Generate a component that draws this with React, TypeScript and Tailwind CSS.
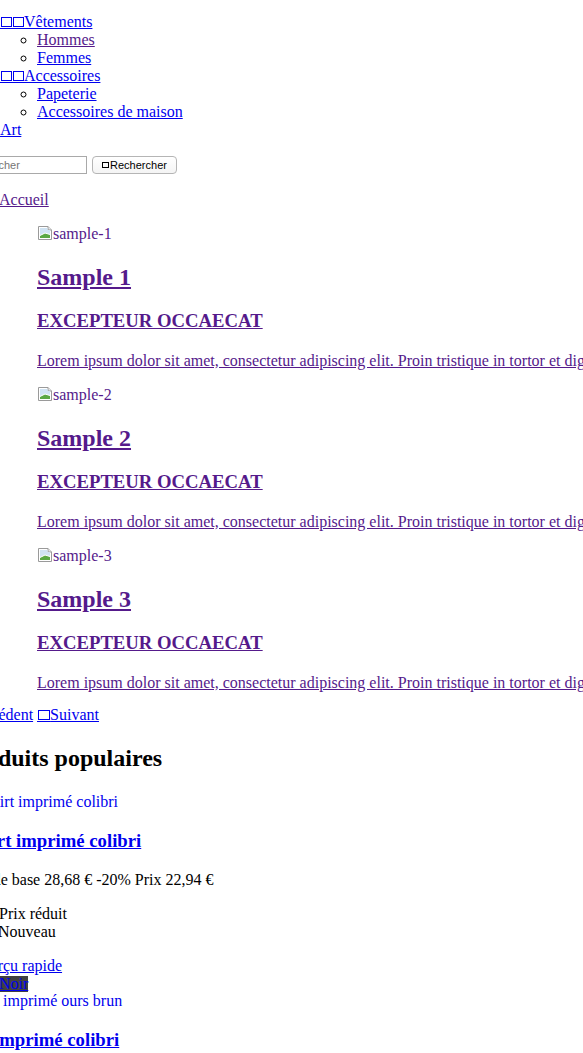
import React from 'react';

const serif = "font-['Liberation_Serif','Times_New_Roman',serif]";

function Tofu({ w = 11, h = 10 }: { w?: number; h?: number }) {
  return (
    <span className="inline-block border-b border-current pb-[1px] -mb-[2px]">
      <span className="block border border-current mx-[0.5px]" style={{ width: w, height: h }} />
    </span>
  );
}

function BrokenImage() {
  return (
    <svg width="16" height="16" viewBox="0 0 16 16" className="inline-block align-[-2px]">
      <path d="M1.5 1.5H11L14.5 5V14.5H1.5Z" fill="#fff" stroke="#9a9a9a" />
      <path d="M11 1.5V5H14.5" fill="#e8e8e8" stroke="#9a9a9a" />
      <rect x="3" y="3" width="7.5" height="10" fill="#cfe3f3" />
      <rect x="3" y="5" width="10" height="8" fill="#cfe3f3" />
      <path d="M3 13V10.5L8 8L13 9.5V13Z" fill="#5aa844" />
      <path d="M3 10.5L8 8L13 9.5" fill="none" stroke="#fff" strokeWidth="1" />
    </svg>
  );
}

const slides = ['1', '2', '3'];

export default function App() {
  return (
    <div
      className={`w-[583px] h-[1053px] overflow-hidden bg-white text-black text-[16px] leading-[18px] whitespace-nowrap ${serif}`}
    >
      {/* menu */}
      <ul className="pt-[13px]">
        <li>
          <a href="#" className="text-[#0000ee] underline">
            <Tofu />
            <Tofu />
            Vêtements
          </a>
          <ul className="list-[circle] pl-[37px]">
            <li>
              <a href="#" className="text-[#551a8b] underline">Hommes</a>
            </li>
            <li>
              <a href="#" className="text-[#0000ee] underline">Femmes</a>
            </li>
          </ul>
        </li>
        <li>
          <a href="#" className="text-[#0000ee] underline">
            <Tofu />
            <Tofu />
            Accessoires
          </a>
          <ul className="list-[circle] pl-[37px]">
            <li>
              <a href="#" className="text-[#0000ee] underline">Papeterie</a>
            </li>
            <li>
              <a href="#" className="text-[#0000ee] underline">Accessoires de maison</a>
            </li>
          </ul>
        </li>
        <li>
          <a href="#" className="text-[#0000ee] underline">Art</a>
        </li>
      </ul>

      {/* search */}
      <form className="mt-[16px] flex items-center gap-[5px] font-['Liberation_Sans',Arial,sans-serif]">
        <input
          type="text"
          placeholder="Rechercher"
          className="-ml-[40px] w-[127px] h-[18px] border border-[#a9a9a9] bg-white px-[2px] text-[11px] text-black placeholder:text-[#757575] outline-none"
        />
        <button
          type="button"
          className="mt-[1px] w-[85px] h-[18px] rounded-[4px] border border-[#b5b5b5] bg-gradient-to-b from-white to-[#f4f4f4] flex items-center justify-center gap-[1px] text-[11px] leading-[14px] text-black"
        >
          <span className="inline-block w-[7px] h-[6px] border border-black" />
          Rechercher
        </button>
      </form>

      {/* breadcrumb */}
      <div className="mt-[17px]">
        <a href="#" className="-ml-[1px] text-[#551a8b] underline">Accueil</a>
      </div>

      {/* slider */}
      <ul className="pl-[37px]">
        {slides.map((n) => (
          <li key={n} className="mt-[16px]">
            <a href="#" className="block text-[#551a8b]">
              <div className="h-[18px]">
                <BrokenImage />
                <span>sample-{n}</span>
              </div>
              <h2 className="mt-[20px] text-[24px] leading-[28px] font-bold underline">Sample {n}</h2>
              <h3 className="mt-[19px] text-[18.72px] leading-[22px] font-bold underline">EXCEPTEUR OCCAECAT</h3>
              <p className="mt-[20px] underline">
                Lorem ipsum dolor sit amet, consectetur adipiscing elit. Proin tristique in tortor et dignissim. Quisque non tempor leo.
              </p>
            </a>
          </li>
        ))}
      </ul>

      <div className="mt-[14px] -ml-[30px]">
        <a href="#" className="text-[#0000ee] underline">Précédent</a>{' '}
        <a href="#" className="text-[#0000ee] underline">
          <Tofu w={12} h={10} />
          Suivant
        </a>
      </div>

      {/* popular products */}
      <h2 className="mt-[20px] -ml-[39px] text-[24px] leading-[28px] font-bold">Produits populaires</h2>

      <div className="mt-[21px] -ml-[28px] text-[#0000ee]">T-shirt imprimé colibri</div>
      <h3 className="mt-[19px] -ml-[43px] text-[18.72px] leading-[22px] font-bold">
        <a href="#" className="text-[#0000ee] underline">T-shirt imprimé colibri</a>
      </h3>
      <div className="mt-[19px] -ml-[38px]">Prix de base 28,68 € -20% Prix 22,94 €</div>
      <ul className="mt-[16px]">
        <li className="-ml-[1px]">Prix réduit</li>
        <li className="-ml-[2px]">Nouveau</li>
      </ul>
      <div className="mt-[16px] -ml-[29px]">
        <a href="#" className="text-[#0000ee] underline">Aperçu rapide</a>
      </div>
      <div className="h-[17px] pt-[1px]">
        <a href="#" className="block w-[29px] -ml-[1px] h-[16px] leading-[16px] bg-[#414141] text-[#0000ee] underline">
          Noir
        </a>
      </div>
      <div className="-ml-[43px] text-[#0000ee]">T-shirt imprimé ours brun</div>
      <h3 className="mt-[19px] -ml-[65px] text-[18.72px] leading-[22px] font-bold">
        <a href="#" className="text-[#0000ee] underline">T-shirt imprimé colibri</a>
      </h3>
    </div>
  );
}
